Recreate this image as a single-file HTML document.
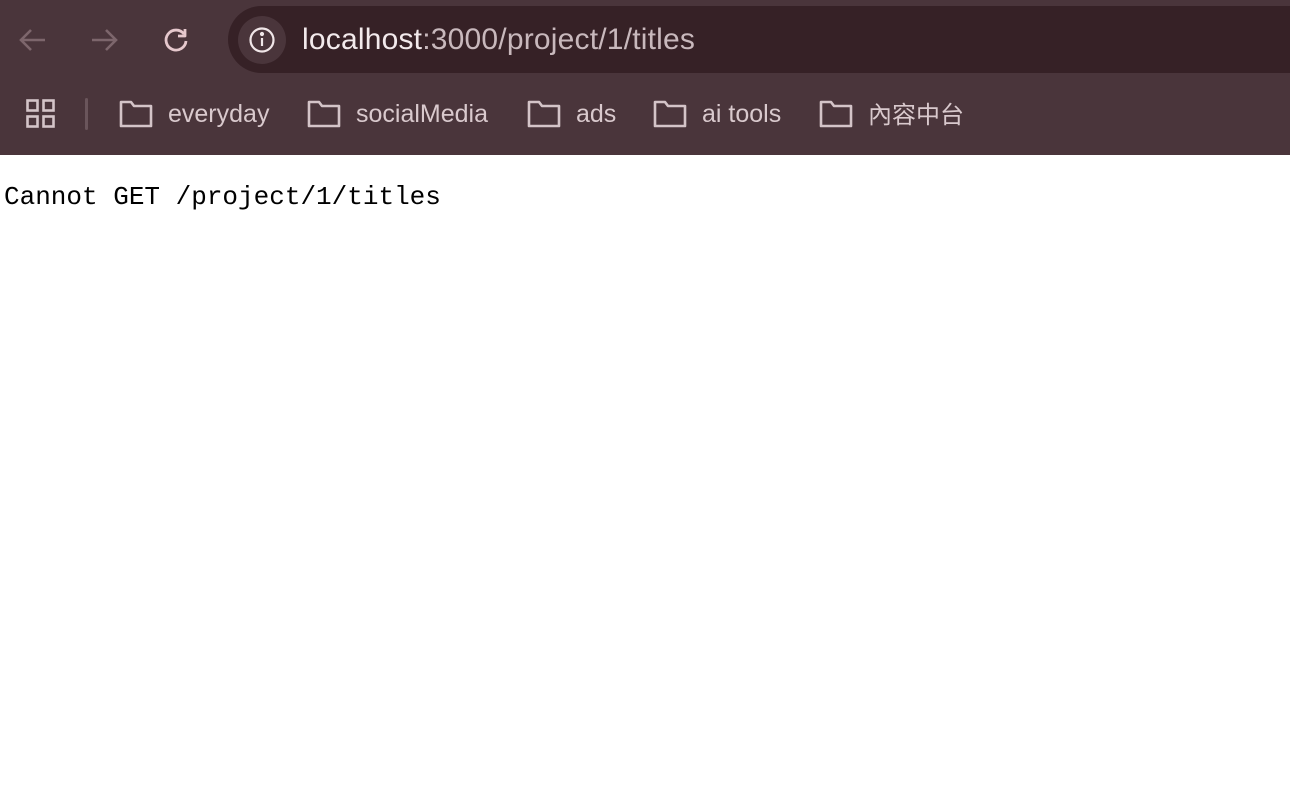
<!DOCTYPE html>
<html><head><meta charset="utf-8"><style>
*{margin:0;padding:0;box-sizing:border-box}
body{width:1290px;height:798px;overflow:hidden;background:#fff;font-family:"Liberation Sans",sans-serif}
#bar{position:absolute;left:0;top:0;width:1290px;height:155px;background:#4a353b}
#url{position:absolute;left:228px;top:6px;width:1100px;height:67px;background:#362126;border-radius:34px}
#info{position:absolute;left:238px;top:16px;width:48px;height:48px;border-radius:24px;background:#4a353b}
.t{position:absolute;color:#d9c9cd;font-size:25px;line-height:30px;white-space:nowrap}
svg{position:absolute}
#msg{position:absolute;left:4px;top:182px;font-family:"Liberation Mono",monospace;font-size:26px;color:#000;white-space:pre}
</style></head><body>
<div id="bar"></div>
<div id="url"></div>
<div id="info"></div>
<svg style="left:18px;top:26px" width="30" height="28" viewBox="0 0 30 28" fill="none" stroke="#7d666c" stroke-width="2.6"><path d="M27 14H4M13 4L3 14l10 10"/></svg>
<svg style="left:89px;top:26px" width="30" height="28" viewBox="0 0 30 28" fill="none" stroke="#7d666c" stroke-width="2.6"><path d="M3 14h23M17 4l10 10-10 10"/></svg>
<svg style="left:162px;top:26px" width="28" height="28" viewBox="0 0 28 28" fill="none" stroke="#e6c8cd" stroke-width="2.8"><path d="M22 8A10 10 0 1 0 24 15"/><path d="M23 3v7h-7" stroke-linejoin="round"/></svg>
<svg style="left:248px;top:26px" width="28" height="28" viewBox="0 0 28 28" fill="none" stroke="#f0e6e8" stroke-width="2.2"><circle cx="14" cy="14" r="11.5"/><path d="M14 12v8"/><circle cx="14" cy="8" r="1" fill="#f0e6e8"/></svg>
<div class="t" style="left:302px;top:23px;font-size:30px;line-height:34px;letter-spacing:0.2px;color:#c8b8bc"><span style="color:#f3eaec">localhost</span>:3000/project/1/titles</div>
<svg style="left:26px;top:99px" width="30" height="30" viewBox="0 0 30 30" fill="none" stroke="#d4c4c8" stroke-width="2.6"><rect x="1.5" y="1.5" width="10" height="10"/><rect x="17.5" y="1.5" width="10" height="10"/><rect x="1.5" y="17.5" width="10" height="10"/><rect x="17.5" y="17.5" width="10" height="10"/></svg>
<div style="position:absolute;left:85px;top:98px;width:3px;height:32px;background:#6a555b;border-radius:2px"></div>
<svg style="left:119px;top:100px" width="34" height="28" viewBox="0 0 34 28" fill="none" stroke="#d4c4c8" stroke-width="2.6" stroke-linejoin="round"><path d="M2 2h10l3 4h17v20H2z"/></svg>
<div class="t" style="left:168px;top:99px">everyday</div>
<svg style="left:307px;top:100px" width="34" height="28" viewBox="0 0 34 28" fill="none" stroke="#d4c4c8" stroke-width="2.6" stroke-linejoin="round"><path d="M2 2h10l3 4h17v20H2z"/></svg>
<div class="t" style="left:356px;top:99px">socialMedia</div>
<svg style="left:527px;top:100px" width="34" height="28" viewBox="0 0 34 28" fill="none" stroke="#d4c4c8" stroke-width="2.6" stroke-linejoin="round"><path d="M2 2h10l3 4h17v20H2z"/></svg>
<div class="t" style="left:576px;top:99px">ads</div>
<svg style="left:653px;top:100px" width="34" height="28" viewBox="0 0 34 28" fill="none" stroke="#d4c4c8" stroke-width="2.6" stroke-linejoin="round"><path d="M2 2h10l3 4h17v20H2z"/></svg>
<div class="t" style="left:702px;top:99px">ai tools</div>
<svg style="left:819px;top:100px" width="34" height="28" viewBox="0 0 34 28" fill="none" stroke="#d4c4c8" stroke-width="2.6" stroke-linejoin="round"><path d="M2 2h10l3 4h17v20H2z"/></svg>
<div class="t" style="left:868px;top:99px;font-size:24px;line-height:28px;font-family:'Noto Sans CJK SC',sans-serif">內容中台</div>
<div id="msg">Cannot GET /project/1/titles</div>
</body></html>
